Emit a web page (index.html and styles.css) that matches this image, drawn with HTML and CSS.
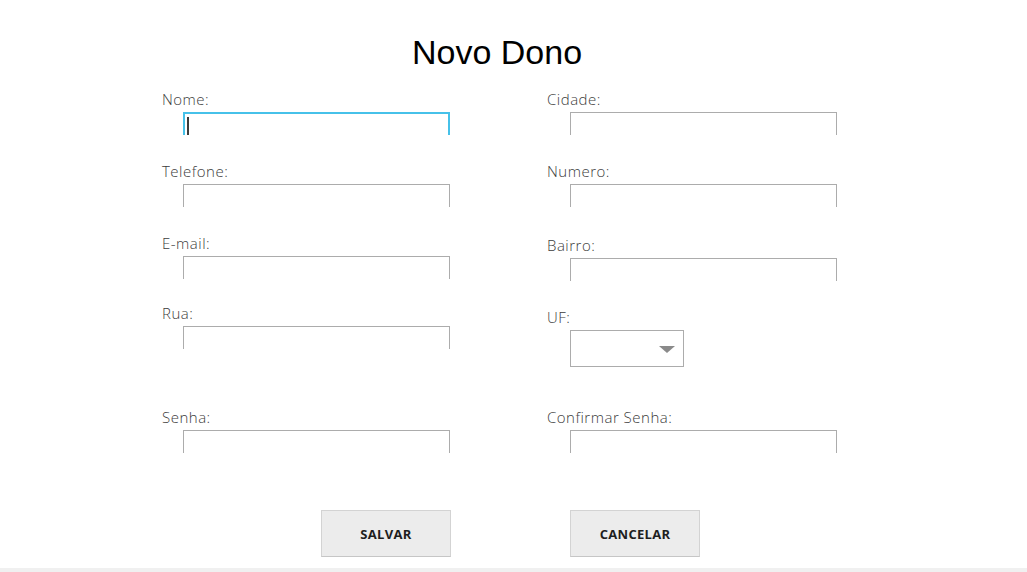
FILE: index.html
```html
<!DOCTYPE html>
<html lang="pt">
<head>
<meta charset="utf-8">
<title>Novo Dono</title>
<link rel="stylesheet" href="styles.css">
</head>
<body>
<main class="page">
  <h1 class="title">Novo Dono</h1>
  <div class="form">
    <div class="field left">
      <label class="label">Nome:</label>
      <div class="box focused"><span class="caret"></span></div>
    </div>
    <div class="field right">
      <label class="label">Cidade:</label>
      <div class="box"></div>
    </div>
    <div class="field left">
      <label class="label">Telefone:</label>
      <div class="box"></div>
    </div>
    <div class="field right">
      <label class="label">Numero:</label>
      <div class="box"></div>
    </div>
    <div class="field left">
      <label class="label">E-mail:</label>
      <div class="box"></div>
    </div>
    <div class="field right shift2">
      <label class="label">Bairro:</label>
      <div class="box"></div>
    </div>
    <div class="field left">
      <label class="label">Rua:</label>
      <div class="box"></div>
    </div>
    <div class="field right shift4">
      <label class="label">UF:</label>
      <div class="combo">
        <svg class="arrow" width="16" height="7" viewBox="0 0 16 7"><polygon points="0,0 16,0 8,7" fill="#8a8a8a"/></svg>
      </div>
    </div>
    <div class="field left">
      <label class="label">Senha:</label>
      <div class="box"></div>
    </div>
    <div class="field right">
      <label class="label">Confirmar Senha:</label>
      <div class="box"></div>
    </div>
  </div>
  <div class="actions">
    <button class="btn">SALVAR</button>
    <button class="btn">CANCELAR</button>
  </div>
</main>
<footer class="strip"></footer>
</body>
</html>
```

FILE: styles.css
```css
html, body {
  margin: 0;
  padding: 0;
  background: #ffffff;
}

body {
  width: 1027px;
  height: 572px;
  overflow: hidden;
  font-family: "Open Sans", "Liberation Sans", sans-serif;
}

.page {
  height: 568px;
  box-sizing: border-box;
  padding-left: 162px;
  padding-top: 33px;
}

.title {
  width: 670px;
  margin: 0;
  text-align: center;
  font-family: "Liberation Sans", Arial, sans-serif;
  font-weight: normal;
  font-size: 34px;
  line-height: 38px;
  color: #000;
}

.form {
  margin-top: 20px;
  display: grid;
  grid-template-columns: 385px 290px;
  grid-template-rows: 72px 72px 70px 104px 81px;
}

.field {
  display: flex;
  flex-direction: column;
  align-items: flex-start;
}

.shift2 { margin-top: 2px; }
.shift4 { margin-top: 4px; }

.label {
  font-size: 15px;
  line-height: 16px;
  letter-spacing: 0.5px;
  font-weight: 300;
  color: #3c3c3c;
  margin-bottom: 5px;
}

.box {
  box-sizing: border-box;
  width: 267px;
  height: 23px;
  border: 1px solid #acacac;
  border-bottom: none;
}

.left .box { margin-left: 21px; }
.right .box, .right .combo { margin-left: 23px; }

.box.focused {
  border: 2px solid #46c1e9;
  border-bottom: none;
  padding: 3px 0 0 2px;
}

.caret {
  display: block;
  width: 2px;
  height: 18px;
  background: #3a3a3a;
}

.combo {
  box-sizing: border-box;
  width: 114px;
  height: 37px;
  border: 1px solid #acacac;
  display: flex;
  align-items: center;
  justify-content: flex-end;
  padding: 2px 8px 0 0;
}

.actions {
  margin-top: 20px;
  padding-left: 159px;
  display: flex;
  gap: 119px;
}

.btn {
  width: 130px;
  height: 47px;
  box-sizing: border-box;
  background: #ececec;
  border: 1px solid #d3d3d3;
  border-bottom-color: #c6c6c6;
  font-family: "Open Sans", "Liberation Sans", sans-serif;
  font-weight: 700;
  font-size: 13px;
  letter-spacing: 0.3px;
  color: #1e1e1e;
  padding: 0;
}

.strip {
  height: 4px;
  background: #f0f0f0;
}
```
